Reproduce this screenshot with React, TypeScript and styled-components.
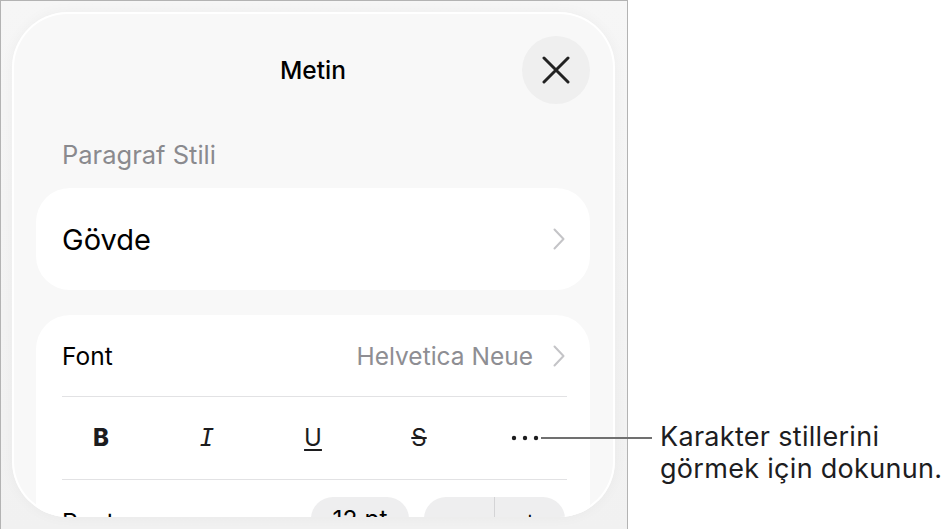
import React from "react";
import styled, { createGlobalStyle } from "styled-components";

const GlobalStyle = createGlobalStyle`
  html, body { margin: 0; padding: 0; background: #ffffff; }
  body {
    font-family: Inter, "Noto Sans", "Liberation Sans", sans-serif;
    -webkit-font-smoothing: antialiased;
    color: #000;
  }
  * { box-sizing: border-box; }
`;

const Stage = styled.div`
  position: relative;
  width: 950px;
  height: 529px;
  overflow: hidden;
  background: #ffffff;
`;

const Frame = styled.div`
  width: 628px;
  height: 529px;
  border: 1px solid #b3b3b3;
  border-bottom: none;
  background: linear-gradient(180deg, #f6f6f6 0%, #f1f1f1 100%);
  padding: 11px 12px 0 11px;
  display: flex;
  flex-direction: column;
`;

const Panel = styled.div`
  height: 505px;
  border-radius: 56px;
  background: #f8f8f8;
  box-shadow: inset 0 0 0 2px #ffffff, 0 0 14px rgba(0, 0, 0, 0.04);
  overflow: hidden;
  display: flex;
  flex-direction: column;
  padding: 24px 25px 0 24px;
`;

const Header = styled.div`
  display: grid;
  grid-template-columns: 68px 1fr 68px;
  align-items: center;
  height: 68px;
`;

const Title = styled.div`
  grid-column: 2;
  text-align: center;
  font-size: 24.5px;
  font-weight: 500;
  color: #000;
`;

const CloseButton = styled.div`
  grid-column: 3;
  width: 68px;
  height: 68px;
  border-radius: 50%;
  background: #efefef;
  display: flex;
  align-items: center;
  justify-content: center;
`;

const SectionLabel = styled.div`
  margin-top: 36px;
  padding-left: 26px;
  font-size: 25.5px;
  line-height: 30px;
  color: #8a8a8e;
`;

const Card = styled.div<{ $top: number }>`
  margin-top: ${(p) => p.$top}px;
  background: #ffffff;
  border-radius: 34px;
  display: flex;
  flex-direction: column;
  flex-shrink: 0;
`;

const NavRow = styled.div<{ $h: number }>`
  height: ${(p) => p.$h}px;
  display: flex;
  align-items: center;
  justify-content: space-between;
  padding: 0 25px 0 26px;
`;

const StyleName = styled.div`
  font-size: 29px;
  color: #000;
`;

const RowLabel = styled.div`
  font-size: 24.5px;
  color: #000;
`;

const RowValue = styled.div`
  display: flex;
  align-items: center;
  gap: 20px;
  font-size: 24.5px;
  color: #8e8e93;
`;

const Divider = styled.div`
  height: 1px;
  background: #e2e2e4;
  margin: 0 23px 0 26px;
`;

const FormatRow = styled.div`
  height: 82px;
  display: grid;
  grid-template-columns: repeat(5, 1fr);
  align-items: center;
  padding: 0 12px;
`;

const FormatButton = styled.div`
  display: flex;
  justify-content: center;
  align-items: center;
  color: #1c1c1e;
  font-size: 24px;
  line-height: 1;
`;

const BoldGlyph = styled.span`
  font-family: Inter, "Liberation Sans", sans-serif;
  font-weight: 800;
  font-size: 24px;
`;

const ItalicGlyph = styled.span`
  font-family: "DejaVu Sans Mono", monospace;
  font-style: oblique;
  font-size: 24px;
  font-weight: 400;
`;

const UnderlineGlyph = styled.span`
  font-size: 24px;
  text-decoration: underline;
  text-decoration-thickness: 1.5px;
  text-underline-offset: 3px;
`;

const StrikeGlyph = styled.span`
  font-size: 24px;
  text-decoration: line-through;
  text-decoration-thickness: 1.5px;
`;

const SizeRow = styled.div`
  display: flex;
  align-items: center;
  padding: 17px 25px 0 26px;
  gap: 15px;
`;

const SizeLabel = styled.div`
  flex: 1;
  font-size: 24.5px;
  color: #000;
  padding-top: 6px;
`;

const Pill = styled.div<{ $w: number }>`
  width: ${(p) => p.$w}px;
  height: 44px;
  border-radius: 22px;
  background: #eeeeef;
  display: flex;
  align-items: center;
  justify-content: center;
  font-size: 24.5px;
  color: #000;
`;

const StepHalf = styled.div<{ $divider?: boolean }>`
  flex: 1;
  height: 100%;
  display: flex;
  align-items: center;
  justify-content: center;
  border-left: ${(p) => (p.$divider ? "1px solid #d4d4d6" : "none")};
  font-size: 28px;
  font-weight: 300;
`;

const Callout = styled.div`
  position: absolute;
  left: 541px;
  top: 421px;
  display: flex;
  align-items: flex-start;
`;

const CalloutLine = styled.div`
  width: 111px;
  height: 1.5px;
  background: #707070;
  margin-top: 16px;
  margin-right: 8px;
`;

const CalloutText = styled.div`
  font-size: 27px;
  line-height: 32px;
  letter-spacing: 0.3px;
  color: #1d1d1f;
  white-space: nowrap;
`;

const BottomBand = styled.div`
  flex: 1;
`;

const Chevron = () => (
  <svg width="12" height="22" viewBox="0 0 12 22" fill="none">
    <path d="M1.5 1.5 L10.5 11 L1.5 20.5" stroke="#c4c4c7" strokeWidth="2" strokeLinecap="round" strokeLinejoin="round" />
  </svg>
);

const CloseIcon = () => (
  <svg width="28" height="28" viewBox="0 0 28 28" fill="none">
    <path d="M2 2 L26 26 M26 2 L2 26" stroke="#222" strokeWidth="3" strokeLinecap="round" />
  </svg>
);

const Ellipsis = () => (
  <svg width="28" height="6" viewBox="0 0 28 6">
    <circle cx="3" cy="3" r="2.2" fill="#1c1c1e" />
    <circle cx="14" cy="3" r="2.2" fill="#1c1c1e" />
    <circle cx="25" cy="3" r="2.2" fill="#1c1c1e" />
  </svg>
);

export default function App() {
  return (
    <>
      <GlobalStyle />
      <Stage>
        <Frame>
          <Panel>
            <Header>
              <Title>Metin</Title>
              <CloseButton>
                <CloseIcon />
              </CloseButton>
            </Header>
            <SectionLabel>Paragraf Stili</SectionLabel>
            <Card $top={18}>
              <NavRow $h={102}>
                <StyleName>Gövde</StyleName>
                <Chevron />
              </NavRow>
            </Card>
            <Card $top={25}>
              <NavRow $h={81}>
                <RowLabel>Font</RowLabel>
                <RowValue>
                  Helvetica Neue
                  <Chevron />
                </RowValue>
              </NavRow>
              <Divider />
              <FormatRow>
                <FormatButton>
                  <BoldGlyph>B</BoldGlyph>
                </FormatButton>
                <FormatButton>
                  <ItalicGlyph>I</ItalicGlyph>
                </FormatButton>
                <FormatButton>
                  <UnderlineGlyph>U</UnderlineGlyph>
                </FormatButton>
                <FormatButton>
                  <StrikeGlyph>S</StrikeGlyph>
                </FormatButton>
                <FormatButton>
                  <Ellipsis />
                </FormatButton>
              </FormatRow>
              <Divider />
              <SizeRow>
                <SizeLabel>Punto</SizeLabel>
                <Pill $w={98}>12 pt</Pill>
                <Pill $w={141}>
                  <StepHalf>−</StepHalf>
                  <StepHalf $divider>+</StepHalf>
                </Pill>
              </SizeRow>
            </Card>
          </Panel>
          <BottomBand />
        </Frame>
        <Callout>
          <CalloutLine />
          <CalloutText>
            Karakter stillerini
            <br />
            görmek için dokunun.
          </CalloutText>
        </Callout>
      </Stage>
    </>
  );
}
